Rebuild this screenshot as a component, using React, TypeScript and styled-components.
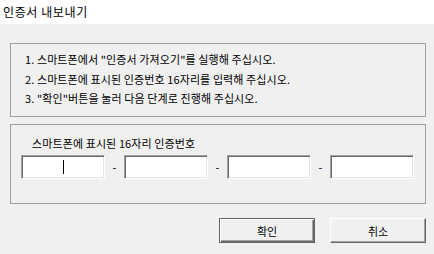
import React from "react";
import styled, { createGlobalStyle } from "styled-components";

const GlobalStyle = createGlobalStyle`
  html, body {
    margin: 0;
    padding: 0;
    background: #f0f0f0;
  }
  body {
    font-family: "Noto Sans CJK KR", "Noto Sans", sans-serif;
    color: #000;
  }
`;

const Dialog = styled.div`
  width: 434px;
  height: 254px;
  background: #f0f0f0;
  display: flex;
  flex-direction: column;
`;

const TitleBar = styled.div`
  height: 24px;
  background: #fff;
  display: flex;
  align-items: center;
  padding-left: 3px;
  font-size: 12px;
  letter-spacing: 0.6px;
  padding-bottom: 1px;
  box-sizing: border-box;
`;

const Body = styled.div`
  display: flex;
  flex-direction: column;
  padding: 19px 8px 0 10px;
`;

const Panel = styled.div<{ $height: number; $gap?: number }>`
  box-sizing: border-box;
  width: 416px;
  height: ${(p) => p.$height}px;
  margin-bottom: ${(p) => p.$gap ?? 0}px;
  border: 1px solid #a0a0a0;
  display: flex;
  flex-direction: column;
`;

const Steps = styled.ol`
  list-style: none;
  margin: 0;
  padding: 6px 0 0 14px;
  font-size: 11px;
  letter-spacing: 0.1px;
`;

const Step = styled.li`
  height: 19.5px;
  line-height: 19.5px;
  white-space: nowrap;
`;

const Label = styled.div`
  font-size: 11px;
  letter-spacing: 0.1px;
  line-height: 14px;
  padding: 11px 0 0 21px;
`;

const CodeRow = styled.div`
  display: flex;
  align-items: center;
  padding: 5px 0 0 10px;
`;

const CodeBox = styled.div`
  box-sizing: border-box;
  width: 84px;
  height: 24px;
  background: #fff;
  border: 1px solid;
  border-color: #a0a0a0 #fff #fff #a0a0a0;
  box-shadow: inset 1px 1px #696969, inset -1px -1px #e3e3e3;
  display: flex;
  align-items: center;
  justify-content: center;
`;

const Caret = styled.span`
  width: 1px;
  height: 14px;
  background: #000;
  margin-left: 1px;
`;

const Dash = styled.span`
  width: 19px;
  text-align: center;
  font-size: 11px;
  line-height: 14px;
  padding-bottom: 1px;
`;

const Actions = styled.div`
  display: flex;
  justify-content: flex-end;
  gap: 15px;
  padding-top: 14px;
`;

const Button = styled.button<{ $default?: boolean }>`
  box-sizing: border-box;
  width: 96px;
  height: 25px;
  margin: 0;
  padding: 0;
  background: #f0f0f0;
  font-family: inherit;
  font-size: 11px;
  color: #000;
  border: 1px solid;
  border-color: ${(p) =>
    p.$default ? "#646464" : "#fff #696969 #696969 #fff"};
  box-shadow: ${(p) =>
    p.$default
      ? "inset 1px 1px #fff, inset -1px -1px #696969, inset -2px -2px #a0a0a0"
      : "inset -1px -1px #a0a0a0"};
`;

const steps = [
  '1. 스마트폰에서 "인증서 가져오기"를 실행해 주십시오.',
  "2. 스마트폰에 표시된 인증번호 16자리를 입력해 주십시오.",
  '3. "확인"버튼을 눌러 다음 단계로 진행해 주십시오.',
];

export default function App() {
  return (
    <>
      <GlobalStyle />
      <Dialog>
        <TitleBar>인증서 내보내기</TitleBar>
        <Body>
          <Panel $height={74} $gap={7}>
            <Steps>
              {steps.map((s) => (
                <Step key={s}>{s}</Step>
              ))}
            </Steps>
          </Panel>
          <Panel $height={80}>
            <Label>스마트폰에 표시된 16자리 인증번호</Label>
            <CodeRow>
              {[0, 1, 2, 3].map((i) => (
                <React.Fragment key={i}>
                  {i > 0 && <Dash>-</Dash>}
                  <CodeBox>{i === 0 && <Caret />}</CodeBox>
                </React.Fragment>
              ))}
            </CodeRow>
          </Panel>
          <Actions>
            <Button $default>확인</Button>
            <Button>취소</Button>
          </Actions>
        </Body>
      </Dialog>
    </>
  );
}
